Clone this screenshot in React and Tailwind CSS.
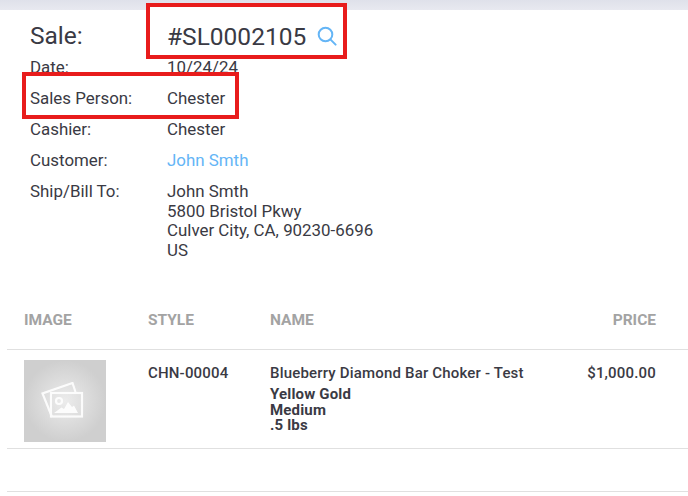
const rows = [
  { label: "Date:", value: "10/24/24" },
  { label: "Sales Person:", value: "Chester", raised: true },
  { label: "Cashier:", value: "Chester" },
  { label: "Customer:", value: "John Smth", link: true },
];

function PhotosIcon() {
  return (
    <svg width="48" height="38" viewBox="0 0 48 38" fill="none" stroke="#fff" strokeWidth="2.2" className="opacity-90">
      <path d="M11 35 L1.5 11.5 L31.5 1 L34.5 10" />
      <rect x="10" y="11" width="31" height="23.5" />
      <circle cx="18" cy="19" r="3" />
      <path d="M13 31 L20.5 25.5 L23 27 L27 20 L31 25 L33 23.5 L37 31 Z" fill="#fff" stroke="none" />
    </svg>
  );
}

export default function App() {
  return (
    <div className="relative h-[496px] w-[688px] overflow-hidden bg-white font-['Roboto',sans-serif] text-[#3a3a44]">
      <div className="h-[10px] bg-gradient-to-b from-[#dfe1ea] to-[#e8e9f0]" />

      <div className="pl-[30px] pt-[9px]">
        <div className="relative z-10 flex h-[33px] items-center text-[24.5px]">
          <span className="mt-[2px] w-[137px]">Sale:</span>
          <span className="mt-[4px]">#SL0002105</span>
          <svg className="ml-[11px] mt-[1px]" width="20" height="20" viewBox="0 0 20 20" fill="none" stroke="#64b5f6" strokeWidth="2" strokeLinecap="round">
            <circle cx="8.5" cy="8.5" r="6.8" />
            <path d="M13.6 13.6 L18.6 18.6" />
          </svg>
        </div>

        <div className="text-[16.9px] leading-[31px]">
          {rows.map((row) => (
            <div key={row.label} className={`flex h-[31px] ${row.raised ? "relative z-10" : ""}`}>
              <span className="w-[137px]">{row.label}</span>
              <span className={row.link ? "text-[#64b5f6]" : ""}>{row.value}</span>
            </div>
          ))}
          <div className="flex pt-[6px] leading-[19.7px]">
            <span className="w-[137px]">Ship/Bill To:</span>
            <div>
              <div>John Smth</div>
              <div>5800 Bristol Pkwy</div>
              <div>Culver City, CA, 90230-6696</div>
              <div>US</div>
            </div>
          </div>
        </div>
      </div>

      <div className="ml-[7px] mt-[35.2px]">
        <div className="flex h-[54px] items-center border-b border-[#e0e0e0] pb-[3px] text-[15.5px] font-bold text-[#a3a3a3]">
          <span className="ml-[17px] w-[124px]">IMAGE</span>
          <span className="w-[122px]">STYLE</span>
          <span>NAME</span>
          <span className="ml-auto mr-[32px]">PRICE</span>
        </div>

        <div className="flex h-[99px] border-b border-[#e0e0e0] pt-[10px] text-[15px] tracking-[0.18px]">
          <div className="ml-[17px] flex h-[82px] w-[82px] items-center justify-center bg-[radial-gradient(circle,#ececec_0%,#cfcfcf_70%)]">
            <PhotosIcon />
          </div>
          <span className="ml-[42px] mt-[4px] w-[122px] font-medium leading-[18px]">CHN-00004</span>
          <div className="mt-[4px]">
            <div className="font-medium leading-[18px]">Blueberry Diamond Bar Choker - Test</div>
            <div className="mt-[5px] font-bold leading-[15.7px]">
              <div>Yellow Gold</div>
              <div>Medium</div>
              <div>.5 lbs</div>
            </div>
          </div>
          <span className="ml-auto mr-[32px] mt-[4px] font-medium leading-[18px]">$1,000.00</span>
        </div>

        <div className="h-[43px] border-b border-[#e0e0e0]" />
      </div>

      {/* red annotation boxes drawn on top of the page */}
      <div className="absolute left-[146px] top-[3px] h-[56px] w-[201px] border-4 border-[#e81c1c] bg-white" />
      <div className="absolute left-[22px] top-[72px] h-[47px] w-[217px] border-4 border-[#e81c1c] bg-white" />
    </div>
  );
}
